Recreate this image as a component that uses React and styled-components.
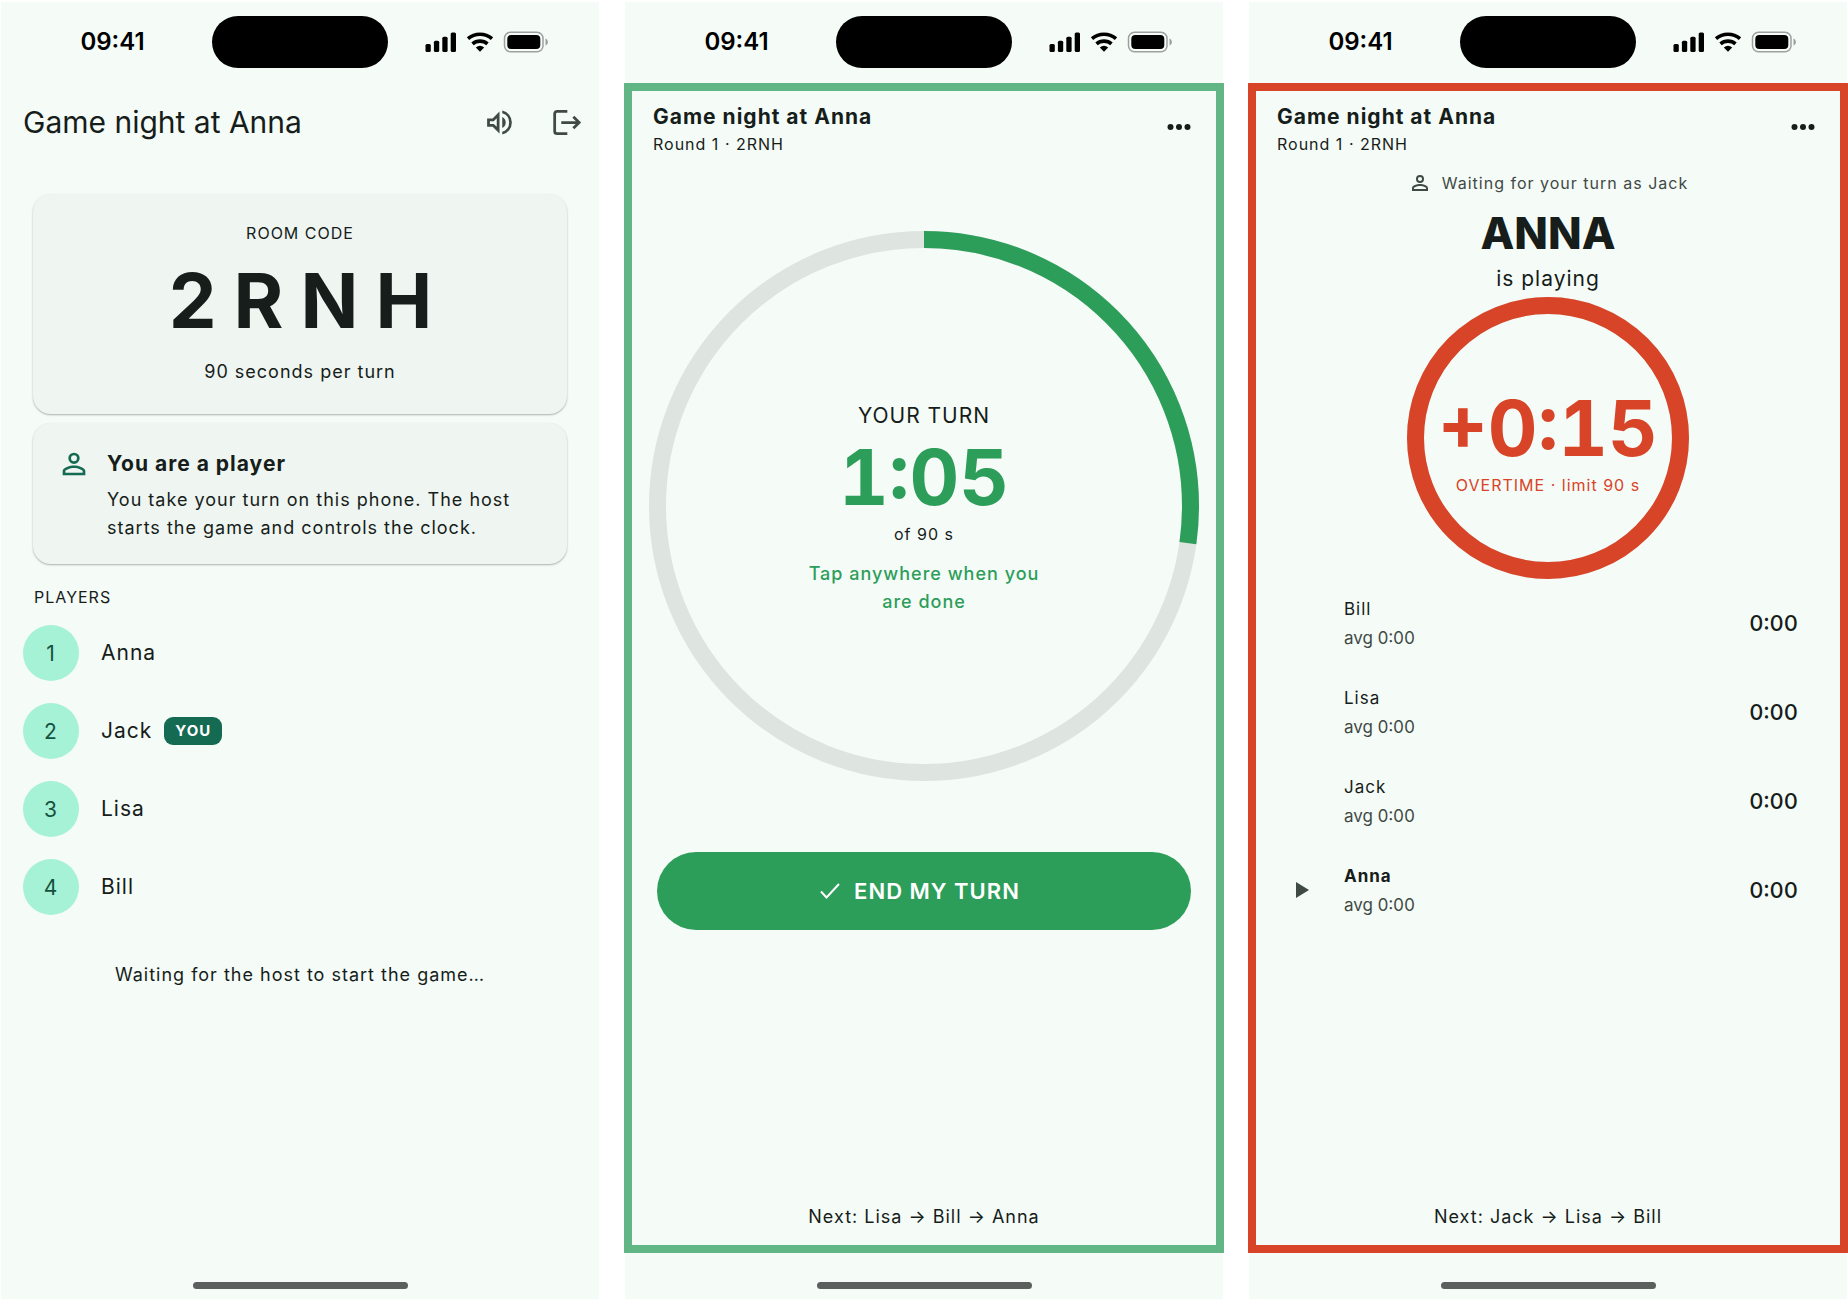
import React from "react";
import styled, { createGlobalStyle } from "styled-components";

const Ink = "#161d1a";
const Muted = "#3f4945";
const Surface = "#f5fbf7";
const CardSurface = "#eff5f1";
const Track = "#dee4e0";
const Green = "#2d9e5a";
const SoftGreen = "#62b584";
const DeepGreen = "#156a52";
const Mint = "#a5f2d6";
const Red = "#d84427";

const GlobalStyle = createGlobalStyle`
  * {
    box-sizing: border-box;
  }
  body {
    margin: 0;
    background: #ffffff;
    color: ${Ink};
    font-family: Inter, "Liberation Sans", sans-serif;
  }
  h1, h2, p, ol, ul {
    margin: 0;
    padding: 0;
    font-weight: 400;
  }
  ol, ul {
    list-style: none;
  }
  button {
    border: 0;
    padding: 0;
    background: none;
    color: inherit;
    font: inherit;
    cursor: pointer;
  }
  svg {
    display: block;
  }
`;

const Board = styled.main`
  display: grid;
  grid-template-columns: repeat(3, minmax(0, 1fr));
  gap: 24px;
  min-height: 100vh;
`;

const Screen = styled.section`
  display: flex;
  flex-direction: column;
  border: 1px solid #ffffff;
  border-top-width: 2px;
  background: ${Surface};
`;

const StatusRow = styled.div`
  display: grid;
  grid-template-columns: 1fr 176px 1fr;
  align-items: center;
  height: 81px;
  padding-bottom: 2px;
`;

const Clock = styled.span`
  padding-left: 12px;
  text-align: center;
  font-size: 24px;
  font-weight: 600;
  line-height: 30px;
  color: #000000;
`;

const Island = styled.div`
  height: 52px;
  border-radius: 26px;
  background: #000000;
`;

const StatusIcons = styled.div`
  display: flex;
  justify-content: center;
  padding-right: 13px;
`;

const Home = styled.div`
  display: flex;
  justify-content: center;
  height: 46px;
  padding-top: 29px;
  &::after {
    content: "";
    width: 215px;
    height: 7px;
    border-radius: 4px;
    background: #5b605e;
  }
`;

const LobbyHeader = styled.header`
  display: flex;
  align-items: center;
  height: 78px;
  padding: 0 13px 0 22px;
  h1 {
    flex: 1;
    font-size: 30px;
    line-height: 40px;
  }
`;

const HeaderIcons = styled.div`
  display: flex;
  gap: 27px;
  color: ${Muted};
`;

const IconButton = styled.button`
  display: flex;
  align-items: center;
  justify-content: center;
  width: 40px;
  height: 40px;
`;

const Lobby = styled.div`
  flex: 1;
  display: flex;
  flex-direction: column;
  padding: 33px 32px 0;
`;

const Card = styled.div`
  margin-bottom: 9px;
  border-radius: 18px;
  background: ${CardSurface};
  box-shadow: 0 1px 2px rgba(0, 0, 0, 0.3);
`;

const RoomCard = styled(Card)`
  display: flex;
  flex-direction: column;
  align-items: center;
  height: 220px;
  padding-top: 27px;
`;

const Caption = styled.p`
  font-size: 16px;
  line-height: 24px;
  letter-spacing: 1px;
`;

const RoomCode = styled.p`
  margin: 5px 0 8px;
  padding-left: 18px;
  font-size: 76px;
  font-weight: 700;
  line-height: 100px;
  letter-spacing: 17px;
`;

const Body = styled.p`
  font-size: 18px;
  line-height: 28px;
  letter-spacing: 1px;
`;

const RoleCard = styled(Card)`
  display: flex;
  gap: 16px;
  padding: 25px 24px 22px;
  color: ${Ink};
  svg {
    flex: none;
    margin-top: -1px;
    color: ${DeepGreen};
  }
  h2 {
    margin-bottom: 6px;
    font-size: 21px;
    font-weight: 700;
    line-height: 32px;
    letter-spacing: 1px;
  }
`;

const PlayersLabel = styled(Caption)`
  margin-top: 12px;
  padding-left: 1px;
`;

const PlayerList = styled.ol`
  display: flex;
  flex-direction: column;
  gap: 22px;
  margin: 16px 0 0 -10px;
`;

const Player = styled.li`
  display: flex;
  align-items: center;
  font-size: 21px;
  line-height: 32px;
  letter-spacing: 1px;
`;

const Seat = styled.span`
  width: 56px;
  height: 56px;
  margin-right: 22px;
  border-radius: 50%;
  background: ${Mint};
  color: #16513f;
  text-align: center;
  line-height: 58px;
`;

const YouBadge = styled.span`
  margin-left: 12px;
  padding: 0 11px;
  border-radius: 9px;
  background: ${DeepGreen};
  color: #ffffff;
  font-size: 15px;
  font-weight: 700;
  line-height: 28px;
`;

const WaitingNote = styled(Body)`
  margin-top: 46px;
  text-align: center;
`;

const Frame = styled.div`
  flex: 1;
  display: flex;
  flex-direction: column;
  margin: 0 -1px;
  border: 8px solid ${props => props.$tone};
`;

const GameHeader = styled.header`
  display: flex;
  justify-content: space-between;
  padding: 11px 17px 0 21px;
  h1 {
    font-size: 21px;
    font-weight: 700;
    line-height: 30px;
    letter-spacing: 1px;
  }
  button {
    margin-top: 5px;
  }
`;

const TurnBody = styled.div`
  flex: 1;
  display: flex;
  flex-direction: column;
  align-items: center;
  padding: ${props => props.$top}px 25px 0;
  text-align: center;
`;

const Dial = styled.div`
  display: grid;
  flex: none;
  width: ${props => props.$size}px;
  height: ${props => props.$size}px;
  > * {
    grid-area: 1 / 1;
  }
`;

const DialText = styled.div`
  display: flex;
  flex-direction: column;
  align-items: center;
  align-self: center;
  justify-self: center;
  padding-top: 3px;
  color: ${props => props.$color};
`;

const Lead = styled.p`
  font-size: 21px;
  line-height: 32px;
  letter-spacing: 1px;
`;

const Time = styled.p`
  font-size: 77px;
  font-weight: 700;
  line-height: 90px;
  font-variant-numeric: tabular-nums;
  white-space: nowrap;
  color: ${props => props.$color};
`;

const Hint = styled(Body)`
  width: 250px;
  margin-top: 14px;
  color: ${Green};
  font-weight: 500;
`;

const EndTurn = styled.button`
  display: flex;
  align-items: center;
  justify-content: center;
  gap: 12px;
  width: 100%;
  height: 78px;
  margin-top: 71px;
  padding-right: 10px;
  border-radius: 39px;
  background: ${Green};
  color: #ffffff;
  font-size: 22px;
  font-weight: 600;
  letter-spacing: 1px;
`;

const NextUp = styled(Body)`
  padding-bottom: 14px;
  text-align: center;
`;

const WaitingAs = styled.div`
  display: flex;
  align-items: center;
  gap: 10px;
  color: ${Muted};
  font-size: 16px;
  line-height: 24px;
  letter-spacing: 1px;
`;

const Active = styled.h2`
  margin: 10px 0 2px;
  font-size: 44px;
  font-weight: 800;
  line-height: 56px;
`;

const OvertimeDial = styled(Dial)`
  margin-top: 2px;
`;

const Scores = styled.ul`
  width: 100%;
  margin-top: -1px;
  padding: 0 17px 0 13px;
`;

const Score = styled.li`
  display: grid;
  grid-template-columns: 50px 1fr auto;
  align-items: center;
  height: 89px;
  text-align: left;
  font-variant-numeric: tabular-nums;
`;

const ScoreName = styled.p`
  font-size: 17px;
  font-weight: ${props => (props.$active ? 700 : 400)};
  line-height: 30px;
  letter-spacing: 1px;
`;

const Average = styled.p`
  font-size: 17px;
  line-height: 28px;
  color: ${Muted};
`;

const ScoreTime = styled.span`
  font-size: 22px;
  font-weight: 500;
`;

const players = ["Anna", "Jack", "Lisa", "Bill"];
const me = "Jack";

const scores = [
  { name: "Bill" },
  { name: "Lisa" },
  { name: "Jack" },
  { name: "Anna", active: true }
];

const PersonIcon = ({ size }) => (
  <svg width={size} height={size} viewBox="0 0 24 24" fill="currentColor">
    <path
      fillRule="evenodd"
      d="M12 4a4 4 0 1 0 0 8 4 4 0 0 0 0-8zm0 1.900a2.100 2.100 0 1 1 0 4.200 2.100 2.100 0 0 1 0-4.200zM12 13c-2.670 0-8 1.340-8 4v3h16v-3c0-2.660-5.330-4-8-4zm6.100 5.100H5.900V17c0-.64 3.130-2.100 6.100-2.100s6.100 1.460 6.100 2.100v1.100z"
    />
  </svg>
);

const StatusBar = () => (
  <StatusRow>
    <Clock>09:41</Clock>
    <Island />
    <StatusIcons>
      <svg width="124" height="22" viewBox="0 0 124 22">
        <rect x="0.500" y="13" width="5.300" height="8" rx="1.500" />
        <rect x="8.900" y="9.700" width="5.300" height="11.300" rx="1.500" />
        <rect x="17.300" y="5.700" width="5.300" height="15.300" rx="1.500" />
        <rect x="25.700" y="1.500" width="5.300" height="19.500" rx="1.500" />
        <g fill="none" stroke="#000000" strokeWidth="3.600">
          <path d="M43 7.700a18.200 18.200 0 0 1 24 0" />
          <path d="M47.500 12.900a11.500 11.500 0 0 1 15 0" />
        </g>
        <path d="M55 20.800l-4.200-4.300a6.500 6.500 0 0 1 8.400 0z" />
        <rect x="79.500" y="1.200" width="38.500" height="19.600" rx="6" fill="none" stroke="#9da09e" strokeWidth="1.500" />
        <rect x="82.300" y="4" width="33" height="14" rx="4" />
        <path d="M120.500 7.500v7c1.500-.6 2.400-2 2.400-3.500s-.9-2.900-2.400-3.500z" fill="#9da09e" />
      </svg>
    </StatusIcons>
  </StatusRow>
);

const GameTitle = () => (
  <GameHeader>
    <div>
      <h1>Game night at Anna</h1>
      <Caption>Round 1 · 2RNH</Caption>
    </div>
    <IconButton aria-label="More options">
      <svg width="26" height="8" viewBox="0 0 26 8" fill={Ink}>
        <circle cx="4.500" cy="4" r="3" />
        <circle cx="13" cy="4" r="3" />
        <circle cx="21.500" cy="4" r="3" />
      </svg>
    </IconButton>
  </GameHeader>
);

const Ring = ({ size, progress, color }) => {
  const width = 17;
  const r = (size - width) / 2;
  const length = 2 * Math.PI * r;
  return (
    <svg width={size} height={size} fill="none" strokeWidth={width}>
      <circle cx={size / 2} cy={size / 2} r={r} stroke={Track} />
      <circle
        cx={size / 2}
        cy={size / 2}
        r={r}
        stroke={color}
        strokeDasharray={`${length * progress} ${length}`}
        transform={`rotate(-90 ${size / 2} ${size / 2})`}
      />
    </svg>
  );
};

const LobbyScreen = () => (
  <Screen>
    <StatusBar />
    <LobbyHeader>
      <h1>Game night at Anna</h1>
      <HeaderIcons>
        <IconButton aria-label="Sound">
          <svg width="33" height="33" viewBox="0 0 24 24" fill="currentColor">
            <path d="M3 9v6h4l5 5V4L7 9H3zm7-.17v6.340L7.830 13H5v-2h2.830L10 8.830zM16.500 12A4.500 4.500 0 0 0 14 7.970v8.050A4.470 4.470 0 0 0 16.500 12zM14 3.230v2.060a7 7 0 0 1 0 13.420v2.060a9 9 0 0 0 0-17.540z" />
          </svg>
        </IconButton>
        <IconButton aria-label="Leave room">
          <svg width="33" height="33" viewBox="0 0 24 24" fill="none" stroke="currentColor" strokeWidth="2">
            <path d="M12.600 3.900H5.200a1.800 1.800 0 0 0-1.800 1.800v12.600a1.800 1.800 0 0 0 1.800 1.800h7.400M8.200 12H21M17 7.800l4.200 4.200-4.200 4.200" />
          </svg>
        </IconButton>
      </HeaderIcons>
    </LobbyHeader>
    <Lobby>
      <RoomCard>
        <Caption>ROOM CODE</Caption>
        <RoomCode>2RNH</RoomCode>
        <Body>90 seconds per turn</Body>
      </RoomCard>
      <RoleCard>
        <PersonIcon size={34} />
        <div>
          <h2>You are a player</h2>
          <Body>You take your turn on this phone. The host starts the game and controls the clock.</Body>
        </div>
      </RoleCard>
      <PlayersLabel>PLAYERS</PlayersLabel>
      <PlayerList>
        {players.map((name, i) => (
          <Player key={name}>
            <Seat>{i + 1}</Seat>
            {name}
            {name === me && <YouBadge>YOU</YouBadge>}
          </Player>
        ))}
      </PlayerList>
      <WaitingNote>Waiting for the host to start the game…</WaitingNote>
    </Lobby>
    <Home />
  </Screen>
);

const MyTurnScreen = () => (
  <Screen>
    <StatusBar />
    <Frame $tone={SoftGreen}>
      <GameTitle />
      <TurnBody $top={75}>
        <Dial $size={550}>
          <Ring size={550} progress={24.5 / 90} color={Green} />
          <DialText>
            <Lead>YOUR TURN</Lead>
            <Time $color={Green}>1:05</Time>
            <Caption>of 90 s</Caption>
            <Hint>Tap anywhere when you are done</Hint>
          </DialText>
        </Dial>
        <EndTurn>
          <svg width="24" height="24" viewBox="0 0 24 24" fill="none" stroke="currentColor" strokeWidth="2">
            <path d="M3 12.500l5.500 6L21 5" />
          </svg>
          END MY TURN
        </EndTurn>
      </TurnBody>
      <NextUp>Next: Lisa → Bill → Anna</NextUp>
    </Frame>
    <Home />
  </Screen>
);

const OvertimeScreen = () => (
  <Screen>
    <StatusBar />
    <Frame $tone={Red}>
      <GameTitle />
      <TurnBody $top={15}>
        <WaitingAs>
          <PersonIcon size={24} />
          Waiting for your turn as Jack
        </WaitingAs>
        <Active>ANNA</Active>
        <Lead>is playing</Lead>
        <OvertimeDial $size={282}>
          <Ring size={282} progress={1} color={Red} />
          <DialText $color={Red}>
            <Time>+0:15</Time>
            <Caption>OVERTIME · limit 90 s</Caption>
          </DialText>
        </OvertimeDial>
        <Scores>
          {scores.map(({ name, active }) => (
            <Score key={name}>
              <span>
                {active && (
                  <svg width="16" height="16" viewBox="0 0 16 16" fill={Muted}>
                    <path d="M2 0l13 8-13 8z" />
                  </svg>
                )}
              </span>
              <div>
                <ScoreName $active={active}>{name}</ScoreName>
                <Average>avg 0:00</Average>
              </div>
              <ScoreTime>0:00</ScoreTime>
            </Score>
          ))}
        </Scores>
      </TurnBody>
      <NextUp>Next: Jack → Lisa → Bill</NextUp>
    </Frame>
    <Home />
  </Screen>
);

const App = () => {
  return (
    <>
      <GlobalStyle />
      <Board>
        <LobbyScreen />
        <MyTurnScreen />
        <OvertimeScreen />
      </Board>
    </>
  );
};

export default App;
